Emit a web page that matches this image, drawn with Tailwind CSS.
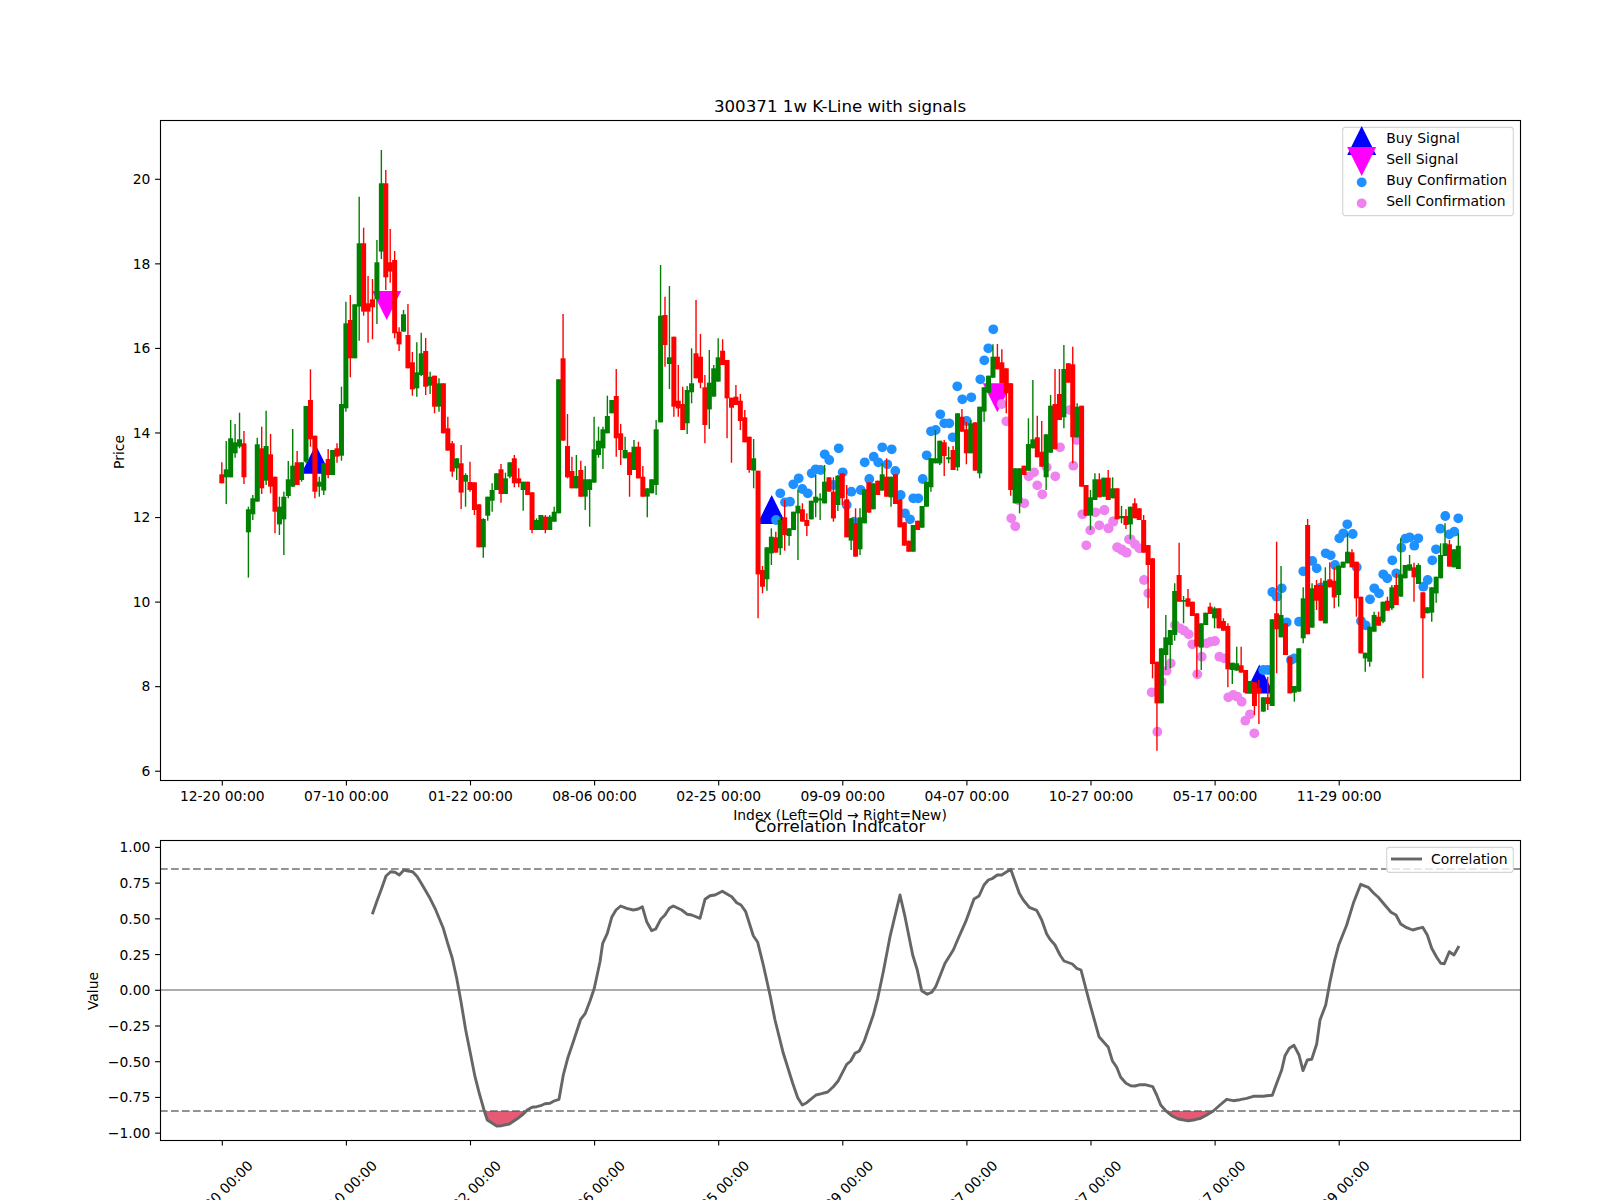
<!DOCTYPE html>
<html lang="en">
  <head>
    <meta charset="UTF-8" />
    <title>300371 1w K-Line with signals</title>
    <script src="https://cdn.jsdelivr.net/npm/@tailwindcss/browser@4"></script>
  </head>
  <body class="bg-white">
    <main class="w-[1600px] h-[1200px] overflow-hidden bg-white">
      <svg id="fig" width="1600" height="1200" viewBox="0 0 1600 1200" class="block font-['DejaVu_Sans',sans-serif] text-[13.89px] fill-black">
        <!-- price panel -->
        <g id="markers"></g>
        <g id="candles"></g>
        <rect x="160.5" y="120.5" width="1360" height="660" fill="none" stroke="#000" stroke-width="1.11"></rect>
        <g id="priceAxis"></g>
        <text x="840" y="112" text-anchor="middle" class="text-[16.67px]">300371 1w K-Line with signals</text>
        <text x="840" y="819.5" text-anchor="middle">Index (Left=Old → Right=New)</text>
        <text x="0" y="0" text-anchor="middle" transform="translate(124 452) rotate(-90)">Price</text>

        <!-- price legend -->
        <rect x="1342.7" y="127.4" width="170.6" height="88.2" rx="2.8" fill="#fff" fill-opacity="0.8" stroke="#d5d5d5" stroke-width="1.11"></rect>
        <polygon points="1361.7,126 1376.2,155 1347.2,155" fill="#0000ff"></polygon>
        <polygon points="1347.2,147 1376.2,147 1361.7,176" fill="#ff00ff"></polygon>
        <circle cx="1361.7" cy="182.3" r="4.9" fill="#1e90ff"></circle>
        <circle cx="1361.7" cy="203.3" r="4.9" fill="#ee82ee"></circle>
        <text x="1386.3" y="143.3">Buy Signal</text>
        <text x="1386.3" y="164.3">Sell Signal</text>
        <text x="1386.3" y="185.3">Buy Confirmation</text>
        <text x="1386.3" y="206.3">Sell Confirmation</text>

        <!-- correlation panel -->
        <line x1="160" x2="1520" y1="990" y2="990" stroke="#adadad" stroke-width="2"></line>
        <line x1="160" x2="1520" y1="869" y2="869" stroke="#808080" stroke-opacity="0.85" stroke-width="2.08" stroke-dasharray="7.7 3.3"></line>
        <line x1="160" x2="1520" y1="1111" y2="1111" stroke="#808080" stroke-opacity="0.85" stroke-width="2.08" stroke-dasharray="7.7 3.3"></line>
        <g id="corr"></g>
        <rect x="160.5" y="840.5" width="1360" height="300" fill="none" stroke="#000" stroke-width="1.11"></rect>
        <g id="corrAxis"></g>
        <text x="840" y="831.5" text-anchor="middle" class="text-[16.67px]">Correlation Indicator</text>
        <text x="0" y="0" text-anchor="middle" transform="translate(98 991) rotate(-90)">Value</text>

        <!-- correlation legend -->
        <rect x="1386.7" y="847.4" width="126.6" height="25" rx="2.8" fill="#fff" fill-opacity="0.8" stroke="#d5d5d5" stroke-width="1.11"></rect>
        <line x1="1391" x2="1422" y1="859" y2="859" stroke="#666666" stroke-width="2.9"></line>
        <text x="1431" y="864">Correlation</text>
      </svg>
    </main>

    <script>
      const NS = "http://www.w3.org/2000/svg";
      function add(parent, tag, attrs, txt) {
        const el = document.createElementNS(NS, tag);
        for (const k in attrs) el.setAttribute(k, attrs[k]);
        if (txt) el.textContent = txt;
        document.getElementById(parent).appendChild(el);
      }

      // colour, wick top, body top, body bottom, wick bottom (traced, y = y0 + v / 3)
      const part1 = `r 1117 1153 1180 1180|g 1053 1138 1162 1242|g 990 1045 1162 1162|g 1002 1057 1090 1103|g 968 1048 1070 1075|r 1023 1060 1162 1182|g 1250 1258 1327 1463|g 1215 1225 1273 1290|g 1043 1063 1235 1235|r 1010 1075 1195 1212|g 962 1068 1172 1185|r 1032 1093 1190 1210|r 1160 1160 1265 1330|g 1220 1250 1303 1335|g 1205 1220 1288 1395|g 1113 1168 1218 1225|g 1017 1127 1190 1190|r 1083 1117 1185 1185|g 1117 1117 1170 1175|g 948 948 1115 1120|r 838 930 1048 1070|r 1037 1037 1205 1225|g 1160 1175 1190 1220|g 1120 1120 1202 1215|r 1077 1107 1155 1165|g 1080 1080 1155 1155|r 1060 1075 1100 1118|g 890 942 1097 1112|g 635 700 955 965|r 615 690 805 862|g 643 643 805 805|g 320 460 650 752|r 413 460 665 677|r 558 640 665 758|r 567 628 652 748|g 450 517 628 702|g 180 280 485 507|r 240 280 562 600|r 417 517 545 578|r 483 510 730 745|r 712 725 763 783|g 660 673 725 725|r 642 735 835 835|r 786 817 898 917|g 757 847 895 920|g 728 790 855 858|r 744 783 890 915|g 845 860 887 912|r 857 857 950 970|g 865 880 950 965|r 880 880 1030 1030|r 980 1015 1082 1082|r 1053 1060 1145 1160|g 1105 1105 1135 1170|r 1065 1120 1208 1257|g 1150 1155 1175 1250|r 1115 1176 1200 1205|r 1177 1177 1260 1275|r 1243 1243 1372 1372|g 1285 1287 1372 1403|g 1220 1220 1277 1292|g 1180 1200 1232 1265|g 1150 1150 1200 1200|r 1122 1138 1212 1238|g 1148 1165 1212 1212|g 1117 1117 1160 1165|r 1095 1105 1180 1192|r 1135 1165 1180 1192|g 1175 1175 1200 1262|r 1175 1175 1215 1215|r 1207 1207 1320 1330|g 1285 1290 1320 1320|g 1275 1275 1320 1320|r 1275 1280 1320 1330|g 1275 1280 1320 1320|g 1250 1265 1295 1295|g 868 868 1270 1270|r 672 805 1052 1052|r 972 1068 1162 1165|r 1100 1143 1195 1195|g 1095 1158 1195 1195|r 1112 1140 1220 1220|g 1128 1168 1220 1260|g 1168 1168 1200 1310|g 980 1078 1178 1178|g 1010 1052 1095 1103|g 1010 1018 1075 1137|g 917 978 1030 1030|g 930 930 970 970|r 837 918 1045 1100|r 1002 1030 1080 1125|g 1040 1080 1105 1105`;
      const part2 = `r 667 667 735 800|g 630 650 720 720|r 635 650 745 745|r 708 740 800 800|g 775 775 800 862|g 748 748 790 790|g 570 598 765 795|g 105 257 577 577|r 200 255 345 410|g 168 382 402 477|r 320 320 530 560|r 405 512 535 560|r 470 522 600 600|g 468 480 580 612|g 355 460 487 520|r 210 370 445 445|r 312 380 458 475|r 435 472 585 640|g 360 458 538 597|g 405 415 500 500|g 325 382 455 455|r 328 362 405 405|r 390 390 505 625|r 503 503 533 698|r 465 500 525 525|r 492 512 573 600|r 540 562 637 637|r 620 620 720 728|g 627 685 722 775|r 722 722 1033 1165|r 1008 1020 1070 1090|g 952 952 1048 1082|g 895 920 970 1005|r 905 922 968 968|g 860 870 955 975|r 810 862 915 962|g 895 895 918 947|g 845 845 900 900|g 780 827 850 990|r 820 838 875 875|r 850 870 888 918|g 812 812 868 868|g 735 800 818 862|g 790 805 812 870|g 705 755 820 820|r 742 742 785 785|r 742 785 865 875|g 735 737 825 843|r 730 730 805 825|r 765 808 922 922|g 865 865 932 960|r 835 880 980 980|g 835 862 958 975|g 778 778 880 880|r 757 757 848 848|g 760 760 838 838|r 752 752 795 795|g 700 733 782 782|r 685 740 800 800|g 740 740 802 830|r 733 733 822 822|r 808 808 892 892|r 877 877 947 947|r 932 932 965 965|g 885 885 965 965|r 872 872 900 900|g 828 828 893 893|g 755 755 830 830|g 685 685 772 785|g 600 685 700 700|g 632 632 700 705|r 630 637 678 738|g 650 682 688 700|r 648 660 720 720|g 550 550 712 722|r 537 560 605 605|r 575 598 670 703|g 570 580 670 670|r 577 577 722 722|g 530 530 730 745|g 472 472 545 575|g 437 437 488 488|g 343 380 443 443|r 342 380 418 418|r 358 397 460 460|r 415 415 490 550|r 460 460 780 797|g 715 715 820 820|g 715 715 820 850|r 707 707 735 735|g 565 642 722 722|g 450 628 655 655|r 557 622 682 682|r 573 665 710 710|g 612 613 742 780|g 495 527 668 668|r 417 522 658 658|r 417 492 570 570|g 345 417 562 595|r 400 400 458 458|r 350 403 622 700|g 520 530 622 622|r 527 527 770 770|r 765 765 857 857|g 780 802 857 900|g 730 748 810 810|r 730 748 802 802|g 743 743 800 800|r 720 743 810 810|g 742 775 805 805`;
      const part3 = `r 25 25 118 118|g 78 108 115 130|r 88 108 135 147|g 80 80 133 178|r 55 70 115 115|r 85 85 120 120|r 105 120 218 218|r 195 195 255 385|r 235 235 552 595|r 545 545 670 812|g 505 505 670 670|g 405 472 525 570|g 450 450 495 565|g 310 333 465 482|r 188 285 365 365|g 348 360 365 430|r 327 355 380 380|r 365 365 408 408|r 400 400 500 592|g 430 430 503 570|g 398 398 435 435|r 368 380 402 402|g 380 385 415 445|r 385 385 445 445|r 415 423 452 452|r 430 438 568 622|g 548 548 570 612|g 500 550 572 572|r 500 556 578 578|r 570 570 638 638|g 603 603 640 640|r 607 607 678 705|r 600 625 640 732|g 652 652 695 695|r 590 652 672 690|g 418 418 678 678|r 185 400 448 580|g 258 405 472 472|r 430 430 525 525|r 530 530 640 640|g 618 618 638 665|g 505 505 635 635|g 322 355 475 490|r 117 135 463 463|g 310 325 443 443|r 300 315 362 390|r 295 315 422 422|g 262 302 430 430|r 247 298 322 322|r 262 302 352 385|g 257 257 345 380|g 245 245 263 263|g 160 215 250 250|r 208 217 262 262|r 245 245 355 410|r 350 350 520 520|g 518 518 535 575|g 440 440 545 560|g 395 405 455 455|r 395 410 437 437|g 365 365 425 430|r 350 362 392 392|g 315 322 385 390|r 280 315 375 375|g 175 283 350 350|g 255 255 295 295|g 225 253 272 272|r 248 262 292 365|g 250 255 312 312|r 337 337 415 595|g 382 382 400 400|g 322 322 398 425|g 290 290 340 368|g 190 225 295 295|g 130 190 228 228|r 180 193 260 260|g 208 208 262 262|g 160 197 267 267`;

      const colors = { r: "#ff0000", g: "#008000" };
      let idx = 0;
      [[part1, 90], [part2, 230], [part3, 480]].forEach(([rows, y0]) => {
        rows.split("|").forEach((row) => {
          const [c, wt, bt, bb, wb] = row.split(" ");
          const x = 221.8 + 4.432 * idx;
          const y = (v) => (y0 + v / 3).toFixed(1);
          add("candles", "line", { x1: x, x2: x, y1: y(wt), y2: y(wb), stroke: colors[c], "stroke-width": 1.4 });
          add("candles", "rect", { x: (x - 2.5).toFixed(2), y: y(bt), width: 5, height: ((bb - bt) / 3).toFixed(1), fill: colors[c] });
          idx++;
        });
      });

      // confirmation dots, zoom coords: [x0, y0, points]
      const blue = [
        [630, 230, "451,790 465,817 480,815 438,870 490,763 506,745 517,777 533,790 545,730 557,718 572,720 584,673 598,690 626,655 638,727 610,765 650,825 664,785 692,780 704,697 718,747 731,680 745,697 757,652 772,703 785,658 796,723 812,795 825,850 840,868 850,805 865,805 878,747 890,676 903,604 917,600 931,553 943,580 958,580 968,622 982,469 997,508 1024,502 1010,573 1051,448 1063,391 1075,355 1090,298 672,875"],
        [1100, 480, "490,570 503,570 517,336 530,350 545,325 560,427 573,540 583,535 597,425 610,274 637,243 650,265 663,322 677,220 692,226 705,255 718,175 730,160 742,133 758,162 770,262 783,423 797,436 810,358 823,325 837,340 850,283 862,295 877,241 889,280 904,203 916,176 929,172 943,197 955,175 970,320 983,300 997,241 1008,208 1021,146 1036,108 1048,163 1063,155 1075,115 660,325"],
      ];
      const pink = [
        [630, 230, "1115,522 1129,574 1290,652 1276,739 1330,707 1250,712 1212,727 1196,739 1222,766 1237,793 1183,820 1144,865 1156,889 1320,540 1340,630 1357,853 1381,901 1396,847 1408,886 1423,841 1436,895 1450,874 1369,946 1462,952 1475,958 1488,967 1497,928 1165,810"],
        [1100, 480, "13,90 25,145 40,125 52,202 65,210 80,218 92,178 105,193 118,205 132,300 145,340 155,637 172,755 185,605 200,572 212,550 225,435 240,445 253,452 266,463 277,493 292,583 305,530 320,490 332,485 345,483 358,530 372,535 385,652 400,645 412,650 425,665 436,722 450,703 463,760"],
      ];
      function tri(cx, yBase, up, fill) {
        const yTip = up ? yBase - 29 : yBase + 29;
        add("markers", "polygon", { points: `${cx - 14.5},${yBase} ${cx + 14.5},${yBase} ${cx},${yTip}`, fill });
      }
      tri(315.7, 473.7, true, "#0000ff");
      tri(771.7, 524, true, "#0000ff");
      tri(1259.3, 693.5, true, "#0000ff");
      tri(386.7, 291, false, "#ff00ff");
      tri(997.3, 383.3, false, "#ff00ff");
      [[blue, "#1e90ff"], [pink, "#ee82ee"]].forEach(([sets, fill]) => {
        sets.forEach(([x0, y0, pts]) => {
          pts.split(" ").forEach((p) => {
            const [a, b] = p.split(",").map(Number);
            add("markers", "circle", { cx: (x0 + a / 3).toFixed(1), cy: (y0 + b / 3).toFixed(1), r: 4.9, fill });
          });
        });
      });

      // correlation line, traced in three crops
      const corrParts = [
        [80, "877,283 890,245 905,205 918,168 932,155 945,157 958,165 972,150 985,153 998,155 1012,170 1025,192 1050,235 1065,265 1090,325 1103,370 1117,415 1130,475 1143,545 1157,630 1172,705 1185,770 1198,820 1212,870 1222,900 1250,918 1265,917 1288,912 1316,893 1330,882 1342,870 1356,862 1370,860 1382,857 1395,851 1410,850 1422,843 1437,838 1450,765 1463,715 1480,665 1502,598 1516,580 1530,543 1543,505"],
        [600, "0,425 8,370 22,340 35,292 48,270 62,258 80,265 100,270 115,267 127,260 140,305 155,332 167,327 182,298 195,285 208,265 220,258 245,270 262,283 275,285 300,295 315,238 330,227 345,225 367,214 395,230 410,248 423,255 437,275 460,347 473,367 490,435 510,525 525,600 550,700 578,790 593,833 607,855 620,848 648,825 665,821 683,816 700,800 715,782 740,733 752,723 765,700 778,693 792,665 820,585 833,535 850,455 870,350 900,225 915,290 938,405 952,450 965,512 982,523 995,517 1007,500 1035,430 1060,390 1075,355 1097,305 1122,237 1137,228 1152,195 1165,180 1178,175 1192,165 1205,165 1232,148 1258,220 1270,240 1288,262 1310,271 1325,300 1340,342 1350,358 1365,375 1380,405 1392,423 1417,432 1430,445 1443,450 1468,545 1497,650"],
        [1100, "25,682 37,722 50,742 62,772 78,790 92,797 105,798 120,794 135,794 158,800 170,825 182,855 198,873 215,887 235,897 265,902 285,899 302,895 320,885 340,873 360,855 380,838 400,842 420,839 440,835 460,829 490,829 500,827 517,826 530,790 545,750 555,707 568,685 582,676 597,705 609,752 622,720 635,718 650,672 660,600 677,555 690,485 703,425 716,375 740,315 760,250 782,193 805,202 820,218 835,232 857,258 873,277 888,285 902,312 920,323 938,330 955,325 968,322 982,345 995,385 1010,412 1022,430 1033,431 1048,395 1062,405 1077,378"],
      ];
      const toPx = (x0, s) => s.split(" ").map((p) => {
        const [a, b] = p.split(",").map(Number);
        return `${(x0 + a / 3).toFixed(1)},${(820 + b / 3).toFixed(1)}`;
      }).join(" ");
      // shaded zones below -0.85
      add("corr", "polygon", { points: toPx(80, "1215,873 1222,900 1250,918 1265,917 1288,912 1316,893 1330,882 1338,873"), fill: "#dc143c", "fill-opacity": 0.7 });
      add("corr", "polygon", { points: toPx(1100, "198,873 215,887 235,897 265,902 285,899 302,895 320,885 340,873"), fill: "#dc143c", "fill-opacity": 0.7 });
      add("corr", "polyline", { points: corrParts.map(([x0, s]) => toPx(x0, s)).join(" "), fill: "none", stroke: "#666666", "stroke-width": 2.9, "stroke-linejoin": "round" });

      // axes
      const labels = ["12-20", "07-10", "01-22", "08-06", "02-25", "09-09", "04-07", "10-27", "05-17", "11-29"];
      labels.forEach((d, i) => {
        const x = 222.3 + 124.1 * i;
        add("priceAxis", "line", { x1: x, x2: x, y1: 780.5, y2: 785.4, stroke: "#000", "stroke-width": 1.11 });
        add("priceAxis", "text", { x, y: 800.6, "text-anchor": "middle" }, d + " 00:00");
        add("corrAxis", "line", { x1: x, x2: x, y1: 1140.5, y2: 1145.4, stroke: "#000", "stroke-width": 1.11 });
        add("corrAxis", "text", { x: 0, y: 5, "text-anchor": "middle", transform: `translate(${x - 2} 1193) rotate(-45)` }, d + " 00:00");
      });
      [20, 18, 16, 14, 12, 10, 8, 6].forEach((p) => {
        const y = 179.3 + (20 - p) * 42.28;
        add("priceAxis", "line", { x1: 155.1, x2: 160, y1: y, y2: y, stroke: "#000", "stroke-width": 1.11 });
        add("priceAxis", "text", { x: 150.3, y: y + 4.8, "text-anchor": "end" }, String(p));
      });
      ["1.00", "0.75", "0.50", "0.25", "0.00", "−0.25", "−0.50", "−0.75", "−1.00"].forEach((t, i) => {
        const y = 847.4 + i * 35.72;
        add("corrAxis", "line", { x1: 155.1, x2: 160, y1: y, y2: y, stroke: "#000", "stroke-width": 1.11 });
        add("corrAxis", "text", { x: 150.3, y: y + 5, "text-anchor": "end" }, t);
      });
    </script>
  </body>
</html>
